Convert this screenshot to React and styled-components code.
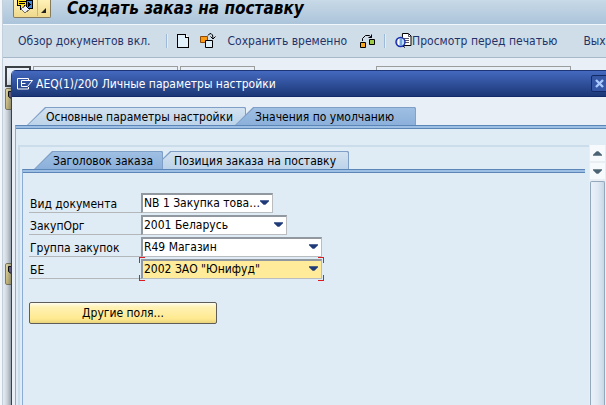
import React from "react";
import styled, { createGlobalStyle, css } from "styled-components";

const Global = createGlobalStyle`
  *, *::before, *::after { box-sizing: border-box; }
  body { margin: 0; overflow: hidden; background: #f4f7fa; }
  body, button, select { font-family: "DejaVu Sans Condensed", "DejaVu Sans", sans-serif; font-size: 12px; }
  button { border: 0; padding: 0; background: none; color: inherit; }
`;

const Screen = styled.div`
  height: 100vh;
  margin-left: 2px;
  display: flex;
  flex-direction: column;
  border-left: 1px solid #c3d0dc;
  background: #e8eff6;
  overflow: hidden;
`;

const TitleBar = styled.header`
  flex: none;
  display: flex;
  align-items: flex-start;
  height: 24px;
  gap: 16px;
  padding-left: 10px;
  background: linear-gradient(#c8d9e7, #abc4da);
`;

const MenuButton = styled.button`
  display: flex;
  height: 18px;
  width: 38px;
  border: 1px solid #857a5c;
  border-top: 0;
  border-radius: 0 0 2px 2px;
  background: linear-gradient(#fff2b8, #eed98c);
`;

const Title = styled.h1`
  margin: 0;
  font-size: 17px;
  line-height: 16px;
  font-style: italic;
  font-weight: bold;
  color: #000;
`;

const Toolbar = styled.nav`
  flex: none;
  display: flex;
  align-items: center;
  height: 34px;
  padding-left: 15px;
  border-top: 1px solid #f2f7fb;
  border-bottom: 1px solid #a5b9c9;
  background: #cfdde8;
  color: #1f3468;
  white-space: nowrap;
`;

const ToolButton = styled.button`
  flex: none;
  display: flex;
  align-items: center;
  margin-right: ${(p) => p.$after}px;
`;

const Divider = styled.span`
  flex: none;
  width: 2px;
  height: 14px;
  margin-right: 9px;
  border-left: 1px solid #9dbbd9;
  background: #e2edf6;
`;

const Workspace = styled.main`
  flex: 1;
  position: relative;
  padding-top: 8px;
  background: #e8eff6;
`;

const FieldStrip = styled.div`
  display: grid;
  grid-template-columns: 26px 145px 75px 117px 195px;
  gap: 2px;
  padding-left: 2px;
`;

const FieldBox = styled.span`
  height: 21px;
  border: ${(p) => (p.$dark ? "2px solid #3c4145" : "1px solid #9a9d9c")};
  background: #e8eff6;
  visibility: ${(p) => (p.$gap ? "hidden" : "visible")};
`;

const SideButtons = styled.div`
  display: grid;
  row-gap: 153px;
  padding: 1px 0 0 2px;
`;

const SideButton = styled.button`
  width: 22px;
  height: 22px;
  border: 1px solid #8a8061;
  border-radius: 2px;
  background: linear-gradient(#f7e9ad, #d9c57e);
  display: flex;
  align-items: flex-start;
  padding: 2px 1px;
`;

const Dialog = styled.section`
  position: absolute;
  top: 12px;
  left: 8px;
  right: -4px;
  bottom: 0;
  display: flex;
  flex-direction: column;
  border-left: 1px solid #24407f;
  border-top-left-radius: 5px;
  background: #e8eff6;
  box-shadow: 0 12px 8px rgba(50, 65, 80, 0.9);
  overflow: hidden;
`;

const DialogBar = styled.div`
  flex: none;
  display: flex;
  align-items: center;
  height: 27px;
  gap: 3px;
  padding: 0 2px 0 5px;
  border-top: 1px solid #1b3576;
  border-bottom: 1px solid #14296a;
  background: linear-gradient(#4469bf, #1b3776);
  color: #fff;
`;

const DialogTitle = styled.h2`
  flex: 1;
  margin: 0;
  font-size: 12px;
  line-height: 16px;
  font-weight: normal;
`;

const CloseButton = styled.button`
  display: flex;
  align-items: center;
  justify-content: center;
  width: 17px;
  height: 17px;
  border: 1px solid #142a66;
  border-radius: 2px;
  background: #3557a5;
`;

const TabRow = styled.div`
  display: flex;
  padding: ${(p) => p.$pad};
`;

const slant = "polygon(18px 0, calc(100% - 1px) 0, 100% 1px, 100% 100%, 0 100%)";

const Tab = styled.button`
  position: relative;
  z-index: ${(p) => (p["aria-selected"] ? 2 : 1)};
  height: 18px;
  padding: 0 ${(p) => p.$end}px 0 ${(p) => p.$start}px;
  line-height: 20px;
  text-align: left;
  white-space: nowrap;
  color: #000;
  background: #7f9fc6;
  clip-path: ${slant};
  & + & { margin-left: -11px; }
  &::before {
    content: "";
    position: absolute;
    z-index: -1;
    inset: 1px 1px 0 1px;
    clip-path: ${slant};
    background: ${(p) =>
      p["aria-selected"]
        ? "linear-gradient(#9fbfe3, #8bb0da)"
        : "linear-gradient(#d3e2f0, #bcd3e9)"};
  }
`;

const edge = css`
  border-top: 1px solid #5c86b8;
  border-left: 1px solid #8badd3;
  &::before {
    content: "";
    display: block;
    height: 3px;
    background: #9dbfe3;
    border-bottom: 1px solid #5c86b8;
  }
`;

const OuterPanel = styled.div`
  ${edge}
  flex: 1;
  display: flex;
  flex-direction: column;
  margin-left: 3px;
  background: #dfebf5;
`;

const Scroller = styled.div`
  flex: 1;
  display: flex;
  margin: 16px 4px 0 2px;
`;

const Sheet = styled.div`
  flex: 1;
  display: flex;
  flex-direction: column;
  border-top: 2px solid #cbdcea;
  border-left: 2px solid #cbdcea;
  padding: 4px 4px 0 2px;
`;

const InnerPanel = styled.form`
  ${edge}
  flex: 1;
`;

const Fields = styled.div`
  display: grid;
  row-gap: 2px;
  padding: 20px 6px 0;
`;

const Field = styled.div`
  display: flex;
  height: 20px;
`;

const Label = styled.label`
  width: 112px;
  height: 20px;
  padding: 3px 0 0 1px;
  line-height: 17px;
  border-bottom: 1px solid #b3b7ba;
`;

const Picker = styled.span`
  position: relative;
  width: ${(p) => p.$width}px;
  height: 20px;
  & > svg {
    position: absolute;
    right: 4px;
    top: 7px;
    pointer-events: none;
  }
`;

const Select = styled.select`
  appearance: none;
  width: 100%;
  height: 20px;
  padding: 0 0 2px 1px;
  border: 1px solid #b9bdc0;
  border-top: 2px solid #9298a0;
  border-left: 2px solid #9298a0;
  border-radius: 0;
  outline: 0;
  color: #000;
  background: ${(p) => (p.$active ? "#ffeb99" : "#fff")};
`;

const line = "linear-gradient(#dc1a20, #dc1a20)";
const FocusCorners = styled.span`
  position: absolute;
  inset: -2px;
  pointer-events: none;
  background:
    ${line} 0 0 / 6px 1px, ${line} 0 0 / 1px 6px,
    ${line} 100% 0 / 6px 1px, ${line} 100% 0 / 1px 6px,
    ${line} 0 100% / 6px 1px, ${line} 0 100% / 1px 6px,
    ${line} 100% 100% / 6px 1px, ${line} 100% 100% / 1px 6px;
  background-repeat: no-repeat;
`;

const MoreButton = styled.button`
  width: 188px;
  height: 22px;
  margin: 23px 6px 0;
  border: 1px solid #5f5d58;
  border-radius: 2px;
  color: #000;
  background: linear-gradient(#fffdf0, #fff2b4 4px, #ffe98f 16px, #e8d27c);
`;

const ScrollBar = styled.div`
  flex: none;
  width: 17px;
  display: flex;
  flex-direction: column;
  gap: 2px;
  padding: 0 1px;
  background: #e9eef4;
`;

const ScrollButton = styled.button`
  display: flex;
  align-items: center;
  justify-content: center;
  height: 16px;
  background: #f7fafd;
`;

const Thumb = styled.div`
  flex: 1;
  border: 1px solid #93a8ba;
  border-bottom: 0;
  border-radius: 2px 2px 0 0;
  background: linear-gradient(90deg, #e9f0f8, #e1eaf4 50%, #c8d8e7);
`;

const Arrow = ({ up, w = 9, color = "#1f3a78" }) => (
  <svg width={w} height="5" viewBox="0 0 10 5" aria-hidden="true">
    <path d={up ? "M0 5h10v-1L6 0H4L0 4z" : "M0 0h10v1L6 5H4L0 1z"} fill={color} />
  </svg>
);

const SpeechIcon = () => (
  <svg width="24" height="16" viewBox="0 0 24 16" shapeRendering="crispEdges" aria-hidden="true">
    <path d="M4 0h10v5h-3l-4 5v-4H4z" fill="#ffe21c" />
    <path d="M3.500 0v5.500h3v4l4-4M5 1.500h7M5 3.500h6" fill="none" stroke="#000" />
    <path d="M7 9l5-4 4 4-5 4z" fill="#eef2f6" stroke="#75705e" />
    <path d="M12.500 .5h6v8h-4l-2-2z" fill="#3f86dc" stroke="#000" />
    <path d="M14 2l3 2.500-3 2.500z" fill="#000" />
    <path d="M23.500 0v16" stroke="#c8b77e" />
  </svg>
);

const CornerIcon = () => (
  <svg width="12" height="16" viewBox="0 0 12 16" aria-hidden="true">
    <path d="M8 8v5H3z" fill="#222" />
  </svg>
);

const PageIcon = () => (
  <svg width="13" height="15" viewBox="0 0 13 15" shapeRendering="crispEdges" aria-hidden="true">
    <path d="M.5 .5h8l3 3v10H.5z" fill="#e3f1fb" stroke="#000" />
    <path d="M8.500 .5v3h3" fill="#fff" stroke="#000" />
  </svg>
);

const ReplaceIcon = () => (
  <svg width="16" height="16" viewBox="0 0 16 16" aria-hidden="true">
    <path d="M.5 3.500h7v6h-7z" fill="#fb9a12" stroke="#8a4a08" />
    <path d="M5.500 7.500h7v7h-7z" fill="#e0f0fb" stroke="#000" />
    <path d="M8 2.500q1-2 3-2 2 .5 2 5M10.500 3.500l2.500 2.500 2.500-2.500" fill="none" stroke="#000" />
  </svg>
);

const FlowIcon = () => (
  <svg width="16" height="15" viewBox="0 0 16 15" aria-hidden="true">
    <path d="M.5 8.500h5v5h-5z" fill="#f9a51d" stroke="#000" />
    <path d="M9.500 5.500h5v5h-5z" fill="#9ecb45" stroke="#000" />
    <path d="M2.500 7V4.500l3-3h4l2 2.500M8.500 3.500h3v-3" fill="none" stroke="#000" />
  </svg>
);

const PreviewIcon = () => (
  <svg width="17" height="16" viewBox="0 0 17 16" aria-hidden="true">
    <path d="M7.500 .5h6l2.500 2.500v9.500h-9z" fill="#fff" stroke="#000" />
    <path d="M13.500 .5v3h3M9 5.500h5M9 7.500h5M9 9.500h5" fill="none" stroke="#556" />
    <circle cx="5.500" cy="9" r="4.500" fill="#b9dcf6" stroke="#1c2fae" strokeWidth="1.500" />
    <path d="M3.500 6v6" stroke="#fff" />
    <path d="M6 5.500v7" stroke="#2a6fc4" />
    <path d="M8 13l2 1.500" stroke="#000" />
  </svg>
);

const SystemIcon = () => (
  <svg width="16" height="12" viewBox="0 0 16 12" aria-hidden="true">
    <path d="M11.500 2V.5H.5v10.500H11.500V9M4.500 2.500h11l-3 3.500M4.500 2.500v6h6l2-2.500M4.500 5.500h4" fill="none" stroke="#fff" />
  </svg>
);

const CrossIcon = () => (
  <svg width="9" height="9" viewBox="0 0 9 9" aria-hidden="true">
    <path d="M1 1l7 7M8 1l-7 7" stroke="#a9c9ff" strokeWidth="2.400" />
  </svg>
);

const ChipIcon = () => (
  <svg width="10" height="9" viewBox="0 0 10 9" aria-hidden="true">
    <path d="M1.500 .5h8v8h-4l-4-3z" fill="#7c6a92" stroke="#000" />
  </svg>
);

const FIELDS = [
  { id: "doc", label: "Вид документа", value: "NB 1 Закупка това…", width: 132 },
  { id: "org", label: "ЗакупОрг", value: "2001 Беларусь", width: 146 },
  { id: "group", label: "Группа закупок", value: "R49 Магазин", width: 181 },
  { id: "be", label: "БЕ", value: '2002 ЗАО "Юнифуд"', width: 181, active: true },
];

export default function App() {
  return (
    <>
      <Global />
      <Screen>
        <TitleBar>
          <MenuButton aria-label="Меню">
            <SpeechIcon />
            <CornerIcon />
          </MenuButton>
          <Title>Создать заказ на поставку</Title>
        </TitleBar>
        <Toolbar>
          <ToolButton $after={15}>Обзор документов вкл.</ToolButton>
          <Divider />
          <ToolButton $after={10} aria-label="Создать"><PageIcon /></ToolButton>
          <ToolButton $after={12} aria-label="Другой заказ"><ReplaceIcon /></ToolButton>
          <ToolButton $after={13}>Сохранить временно</ToolButton>
          <ToolButton $after={8} aria-label="Связи"><FlowIcon /></ToolButton>
          <Divider />
          <ToolButton $after={26}><PreviewIcon />Просмотр перед печатью</ToolButton>
          <ToolButton $after={0}>Выход</ToolButton>
        </Toolbar>
        <Workspace>
          <FieldStrip>
            <FieldBox $dark />
            <FieldBox />
            <FieldBox />
            <FieldBox $gap />
            <FieldBox />
          </FieldStrip>
          <SideButtons>
            <SideButton aria-label="Заголовок"><ChipIcon /></SideButton>
            <SideButton aria-label="Позиция"><ChipIcon /></SideButton>
          </SideButtons>
          <Dialog role="dialog" aria-labelledby="dialog-title">
            <DialogBar>
              <SystemIcon />
              <DialogTitle id="dialog-title">AEQ(1)/200 Личные параметры настройки</DialogTitle>
              <CloseButton aria-label="Закрыть"><CrossIcon /></CloseButton>
            </DialogBar>
            <TabRow role="tablist" $pad="10px 0 0 15px">
              <Tab role="tab" aria-selected={false} $start={19} $end={13}>Основные параметры настройки</Tab>
              <Tab role="tab" aria-selected={true} $start={20} $end={22}>Значения по умолчанию</Tab>
            </TabRow>
            <OuterPanel>
              <Scroller>
                <Sheet>
                  <TabRow role="tablist" $pad="0 0 0 12px">
                    <Tab role="tab" aria-selected={true} $start={19} $end={10}>Заголовок заказа</Tab>
                    <Tab role="tab" aria-selected={false} $start={22} $end={13}>Позиция заказа на поставку</Tab>
                  </TabRow>
                  <InnerPanel>
                    <Fields>
                      {FIELDS.map((f) => (
                        <Field key={f.id}>
                          <Label htmlFor={f.id}>{f.label}</Label>
                          <Picker $width={f.width}>
                            <Select id={f.id} $active={f.active}>
                              <option>{f.value}</option>
                            </Select>
                            <Arrow />
                            {f.active && <FocusCorners />}
                          </Picker>
                        </Field>
                      ))}
                    </Fields>
                    <MoreButton type="button">Другие поля...</MoreButton>
                  </InnerPanel>
                </Sheet>
                <ScrollBar>
                  <ScrollButton aria-label="Вверх"><Arrow up color="#4b6373" /></ScrollButton>
                  <ScrollButton aria-label="Вниз"><Arrow color="#4b6373" /></ScrollButton>
                  <Thumb />
                </ScrollBar>
              </Scroller>
            </OuterPanel>
          </Dialog>
        </Workspace>
      </Screen>
    </>
  );
}
